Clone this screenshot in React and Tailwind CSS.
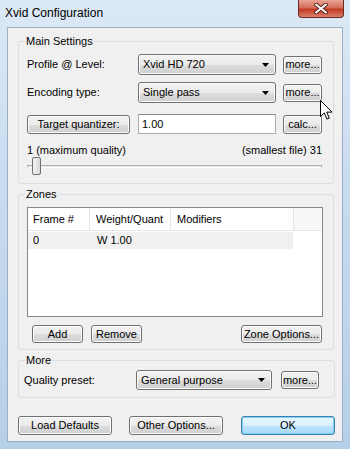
const font = { fontFamily: '"Liberation Sans", Arial, sans-serif' };

function Btn({ children, className = "" }) {
  return (
    <div
      className={`flex items-center justify-center rounded-[3px] border border-[#707070] bg-[linear-gradient(to_bottom,#f2f2f2_0%,#ebebeb_50%,#dddddd_51%,#cfcfcf_100%)] text-[11px] leading-none text-black shadow-[inset_0_0_0_1px_#fcfcfc] ${className}`}
    >
      {children}
    </div>
  );
}

function Combo({ value, className = "" }) {
  return (
    <div
      className={`flex items-center justify-between rounded-[3px] border border-[#707070] bg-[linear-gradient(to_bottom,#f2f2f2_0%,#ebebeb_50%,#dddddd_51%,#cfcfcf_100%)] pl-[4px] pr-[6px] text-[11px] text-black shadow-[inset_0_0_0_1px_#fcfcfc] ${className}`}
    >
      <span>{value}</span>
      <svg width="7" height="4" viewBox="0 0 7 4">
        <path d="M0 0h7L3.5 4z" fill="#000" />
      </svg>
    </div>
  );
}

function Group({ title, className = "", children }) {
  return (
    <fieldset className={`rounded-[3px] border border-[#d5dfe5] ${className}`}>
      <legend className="ml-[6px] px-[1px] text-[11px] leading-[13px]">{title}</legend>
      {children}
    </fieldset>
  );
}

export default function App() {
  return (
    <div
      className="relative h-[449px] w-[350px] overflow-hidden bg-[linear-gradient(to_bottom,#dce9f6_0%,#c9dcef_40%,#b6cfe8_100%)]"
      style={font}
    >
      {/* title bar */}
      <div className="flex h-[27px] items-start justify-between">
        <div className="pl-[5px] pt-[6px] text-[12px] leading-[14px] text-black">Xvid Configuration</div>
        <div className="mr-[6px] flex h-[18px] w-[46px] items-center justify-center rounded-b-[4px] border border-t-0 border-[#6d2a22] bg-[linear-gradient(to_bottom,#e8a593_0%,#d46c5a_45%,#c23a24_55%,#d9806a_100%)]">
          <svg width="14" height="11" viewBox="0 0 14 11">
            <path d="M2 1.5l10 8M12 1.5l-10 8" stroke="#4a1a14" strokeWidth="3.6" strokeLinecap="round" />
            <path d="M2 1.5l10 8M12 1.5l-10 8" stroke="#fff" strokeWidth="2" strokeLinecap="round" />
          </svg>
        </div>
      </div>

      {/* client */}
      <div className="ml-[7px] flex h-[415px] w-[336px] flex-col border border-[#9aafc5] bg-[#f0f0f0] pl-[10px] text-[11px] text-black">
        <Group title="Main Settings" className="mt-[7px] h-[149px] w-[316px]">
          <div className="pl-[8px]">
            <div className="mt-[6px] flex items-center">
              <span className="w-[111px]">Profile @ Level:</span>
              <Combo value="Xvid HD 720" className="h-[21px] w-[138px]" />
              <Btn className="ml-[7px] h-[18px] w-[39px]">more...</Btn>
            </div>
            <div className="mt-[7px] flex items-center">
              <span className="w-[111px]">Encoding type:</span>
              <Combo value="Single pass" className="h-[21px] w-[138px]" />
              <Btn className="ml-[7px] h-[18px] w-[39px]">more...</Btn>
            </div>
            <div className="mt-[11px] flex items-center">
              <Btn className="h-[19px] w-[103px]">Target quantizer:</Btn>
              <div className="ml-[8px] flex h-[20px] w-[138px] items-center border border-[#abadb3] border-t-[#8a8c94] bg-white pl-[3px]">
                1.00
              </div>
              <Btn className="ml-[7px] h-[19px] w-[39px]">calc...</Btn>
            </div>
            <div className="mt-[10px] flex w-[295px] justify-between leading-[13px]">
              <span>1 (maximum quality)</span>
              <span>(smallest file) 31</span>
            </div>
            <div className="relative h-[18px] w-[295px]">
              <div className="absolute left-0 right-0 top-[8px] h-[3px] border border-[#b0b0b0] border-b-white bg-[#e7eaea]" />
              <div className="absolute left-[5px] top-0 h-[18px] w-[9px] rounded-[2px] border border-[#707070] bg-[linear-gradient(to_right,#f5f5f5,#d8d8d8)]" />
            </div>
          </div>
        </Group>

        <Group title="Zones" className="mt-[4px] h-[162px] w-[316px]">
          <div className="pl-[8px]">
            <div className="mt-[6px] flex h-[110px] w-[296px] flex-col border border-[#828790] bg-white">
              <div className="flex h-[23px] items-center border-b border-[#e5e5e5]">
                <div className="flex h-full w-[62px] items-center border-r border-[#e5e5e5] pl-[5px]">Frame #</div>
                <div className="flex h-full w-[81px] items-center border-r border-[#e5e5e5] pl-[6px]">Weight/Quant</div>
                <div className="flex h-full w-[123px] items-center border-r border-[#e5e5e5] pl-[6px]">Modifiers</div>
                <div className="h-full flex-1 bg-[#f7f8f9]" />
              </div>
              <div className="mt-[1px] flex h-[17px] w-[265px] items-center bg-[#f0f0f0]">
                <span className="w-[63px] pl-[5px]">0</span>
                <span className="pl-[6px]">W 1.00</span>
              </div>
            </div>
            <div className="mt-[8px] flex w-[296px] items-center">
              <Btn className="ml-[5px] h-[18px] w-[51px]">Add</Btn>
              <Btn className="ml-[8px] h-[18px] w-[51px]">Remove</Btn>
              <Btn className="ml-auto mr-[1px] h-[18px] w-[81px]">Zone Options...</Btn>
            </div>
          </div>
        </Group>

        <Group title="More" className="mt-[4px] h-[44px] w-[317px]">
          <div className="mt-[3px] flex items-center pl-[5px]">
            <span className="w-[112px]">Quality preset:</span>
            <Combo value="General purpose" className="h-[20px] w-[136px]" />
            <Btn className="ml-[9px] h-[18px] w-[38px]">more...</Btn>
          </div>
        </Group>

        <div className="mt-[18px] flex items-center">
          <Btn className="h-[19px] w-[94px]">Load Defaults</Btn>
          <Btn className="ml-[17px] h-[19px] w-[94px]">Other Options...</Btn>
          <div className="ml-[18px] flex h-[19px] w-[94px] items-center justify-center rounded-[3px] border border-[#3c7fb1] bg-[linear-gradient(to_bottom,#eaf6fd_0%,#d9f0fc_50%,#bee6fd_51%,#a7d9f5_100%)] text-[11px] leading-none shadow-[inset_0_0_0_1px_#7fd0f5]">
            OK
          </div>
        </div>
      </div>

      {/* mouse pointer */}
      <svg className="absolute left-[320px] top-[100px]" width="13" height="21" viewBox="0 0 13 21">
        <path d="M0.5 0.5v16l3.8-3.6 2.6 6.2 2.4-1-2.6-6h5.3z" fill="#fff" stroke="#000" strokeWidth="1" strokeLinejoin="round" />
      </svg>
    </div>
  );
}
